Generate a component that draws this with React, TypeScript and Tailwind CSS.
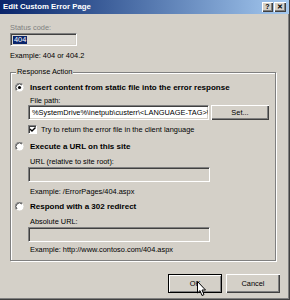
import type { ReactNode } from "react";

const FONT = "font-['Liberation_Sans',Arial,sans-serif]";

function Radio({ checked }: { checked?: boolean }) {
  return (
    <svg width="9" height="9" viewBox="0 0 9 9" className="shrink-0">
      <circle cx="4.5" cy="4.5" r="4.5" fill="#ffffff" />
      <path d="M7.7 1.3 A4.5 4.5 0 0 0 1.3 7.7" fill="none" stroke="#808080" strokeWidth="1" />
      <path d="M7 2 A3.5 3.5 0 0 0 2 7" fill="none" stroke="#404040" strokeWidth="1" />
      <path d="M1.3 7.7 A4.5 4.5 0 0 0 7.7 1.3" fill="none" stroke="#d4d0c8" strokeWidth="1" />
      {checked && <circle cx="4.5" cy="4.5" r="1.6" fill="#000000" />}
    </svg>
  );
}

function Checkbox() {
  return (
    <div className="flex h-[9px] w-[9px] shrink-0 items-center justify-center border-t border-l border-t-[#808080] border-l-[#808080] border-b border-r border-b-white border-r-white bg-white shadow-[inset_1px_1px_0_#404040]">
      <svg width="7" height="7" viewBox="0 0 7 7">
        <path d="M1 3 L3 5 L6.5 1.5" fill="none" stroke="#000" strokeWidth="1.4" />
      </svg>
    </div>
  );
}

function Field({ className, children }: { className: string; children?: ReactNode }) {
  return (
    <div
      className={`overflow-hidden border-t border-l border-t-[#808080] border-l-[#808080] border-b border-r border-b-white border-r-white shadow-[inset_1px_1px_0_#404040,inset_-1px_-1px_0_#d4d0c8] ${className}`}
    >
      {children}
    </div>
  );
}

function Button({ children, def, className }: { children: ReactNode; def?: boolean; className: string }) {
  return (
    <div
      className={`relative flex items-center justify-center bg-[#d4d0c8] text-[7.4px] text-black ${
        def
          ? "border border-black shadow-[inset_1px_1px_0_#fff,inset_-1px_-1px_0_#808080]"
          : "shadow-[inset_1px_1px_0_#fff,inset_-1px_-1px_0_#404040,inset_-2px_-2px_0_#808080]"
      } ${className}`}
    >
      {children}
    </div>
  );
}

export default function App() {
  return (
    <div
      className={`${FONT} flex h-[300px] w-[290px] flex-col overflow-hidden bg-[#d4d0c8] text-black shadow-[inset_-1px_-1px_0_#404040,inset_-2px_-2px_0_#808080]`}
    >
      {/* title bar */}
      <div className="flex h-[14px] w-[289px] shrink-0 items-center justify-between bg-gradient-to-r from-[#0a246a] to-[#a6caf0] pl-[3px] pr-[3px]">
        <span className="text-[7.8px] font-bold leading-none text-white">Edit Custom Error Page</span>
        <div className="flex gap-[1px]">
          <Button className="h-[10px] w-[11px] !text-[7px] font-bold">?</Button>
          <Button className="h-[10px] w-[12px] !text-[7px] font-bold">✕</Button>
        </div>
      </div>

      <div className="flex flex-col pl-[10px] pr-[10px] pt-[10px]">
        <p className="text-[7.4px] leading-[8px] text-[#808080]">Status code:</p>
        <Field className="mt-[1px] flex h-[13px] w-[67px] items-center bg-[#dcd9d3] pl-[2px]">
          <span className="bg-[#0a246a] px-[1px] text-[7.4px] leading-[8px] text-white">404</span>
        </Field>
        <p className="mt-[6px] text-[7.4px] leading-[8px]">Example: 404 or 404.2</p>

        {/* group box */}
        <div className="relative mr-[4px] mt-[12px] border border-[#808080] pb-[6px] pl-[4px] pr-[4px] pt-[10px] shadow-[inset_1px_1px_0_#fff,1px_1px_0_#fff]">
          <span className="absolute -top-[5px] left-[5px] bg-[#d4d0c8] px-[1px] text-[7.4px] leading-[8px]">
            Response Action
          </span>

          <div className="flex h-[9px] items-center gap-[6px]">
            <Radio checked />
            <span className="whitespace-nowrap text-[8px] font-bold leading-[8px]">
              Insert content from static file into the error response
            </span>
          </div>

          <div className="ml-[13px] flex flex-col">
            <p className="mt-[5px] pl-[2px] text-[7.4px] leading-[8px]">File path:</p>
            <div className="flex items-center gap-[2px]">
              <Field className="flex h-[15px] w-[181px] items-center bg-white pl-[3px]">
                <span className="whitespace-nowrap text-[7.4px] leading-[8px]">
                  {"%SystemDrive%\\inetpub\\custerr\\<LANGUAGE-TAG>\\404.htm"}
                </span>
              </Field>
              <Button className="h-[15px] w-[58px]">Set...</Button>
            </div>
            <div className="mt-[5px] flex h-[9px] items-center gap-[4px]">
              <Checkbox />
              <span className="whitespace-nowrap text-[7.4px] leading-[8px]">
                Try to return the error file in the client language
              </span>
            </div>
          </div>

          <div className="mt-[8px] flex h-[9px] items-center gap-[6px]">
            <Radio />
            <span className="text-[8px] font-bold leading-[8px]">Execute a URL on this site</span>
          </div>
          <div className="ml-[13px] flex flex-col">
            <p className="mt-[7px] pl-[2px] text-[7.4px] leading-[8px]">URL (relative to site root):</p>
            <Field className="mt-[1px] h-[15px] w-[182px] bg-[#d4d0c8]" />
            <p className="mt-[6px] pl-[2px] text-[7.4px] leading-[8px]">Example: /ErrorPages/404.aspx</p>
          </div>

          <div className="mt-[6px] flex h-[9px] items-center gap-[6px]">
            <Radio />
            <span className="text-[8px] font-bold leading-[8px]">Respond with a 302 redirect</span>
          </div>
          <div className="ml-[13px] flex flex-col">
            <p className="mt-[7px] pl-[2px] text-[7.4px] leading-[8px]">Absolute URL:</p>
            <Field className="mt-[1px] h-[15px] w-[182px] bg-[#d4d0c8]" />
            <p className="mt-[4px] pl-[2px] text-[7.4px] leading-[8px]">Example: http://www.contoso.com/404.aspx</p>
          </div>
        </div>

        {/* dialog buttons */}
        <div className="mt-[13px] flex justify-end gap-[4px]">
          <Button def className="h-[19px] w-[54px]">
            OK
            <svg width="10" height="16" viewBox="0 0 10 16" className="absolute left-[28px] top-[6px]">
              <path
                d="M0.5 0.5 L0.5 12 L3 9.6 L5 14.5 L7 13.6 L5 9 L8.5 9 Z"
                fill="#ffffff"
                stroke="#000000"
                strokeWidth="1"
                strokeLinejoin="round"
              />
            </svg>
          </Button>
          <Button className="h-[19px] w-[54px]">Cancel</Button>
        </div>
      </div>
    </div>
  );
}
